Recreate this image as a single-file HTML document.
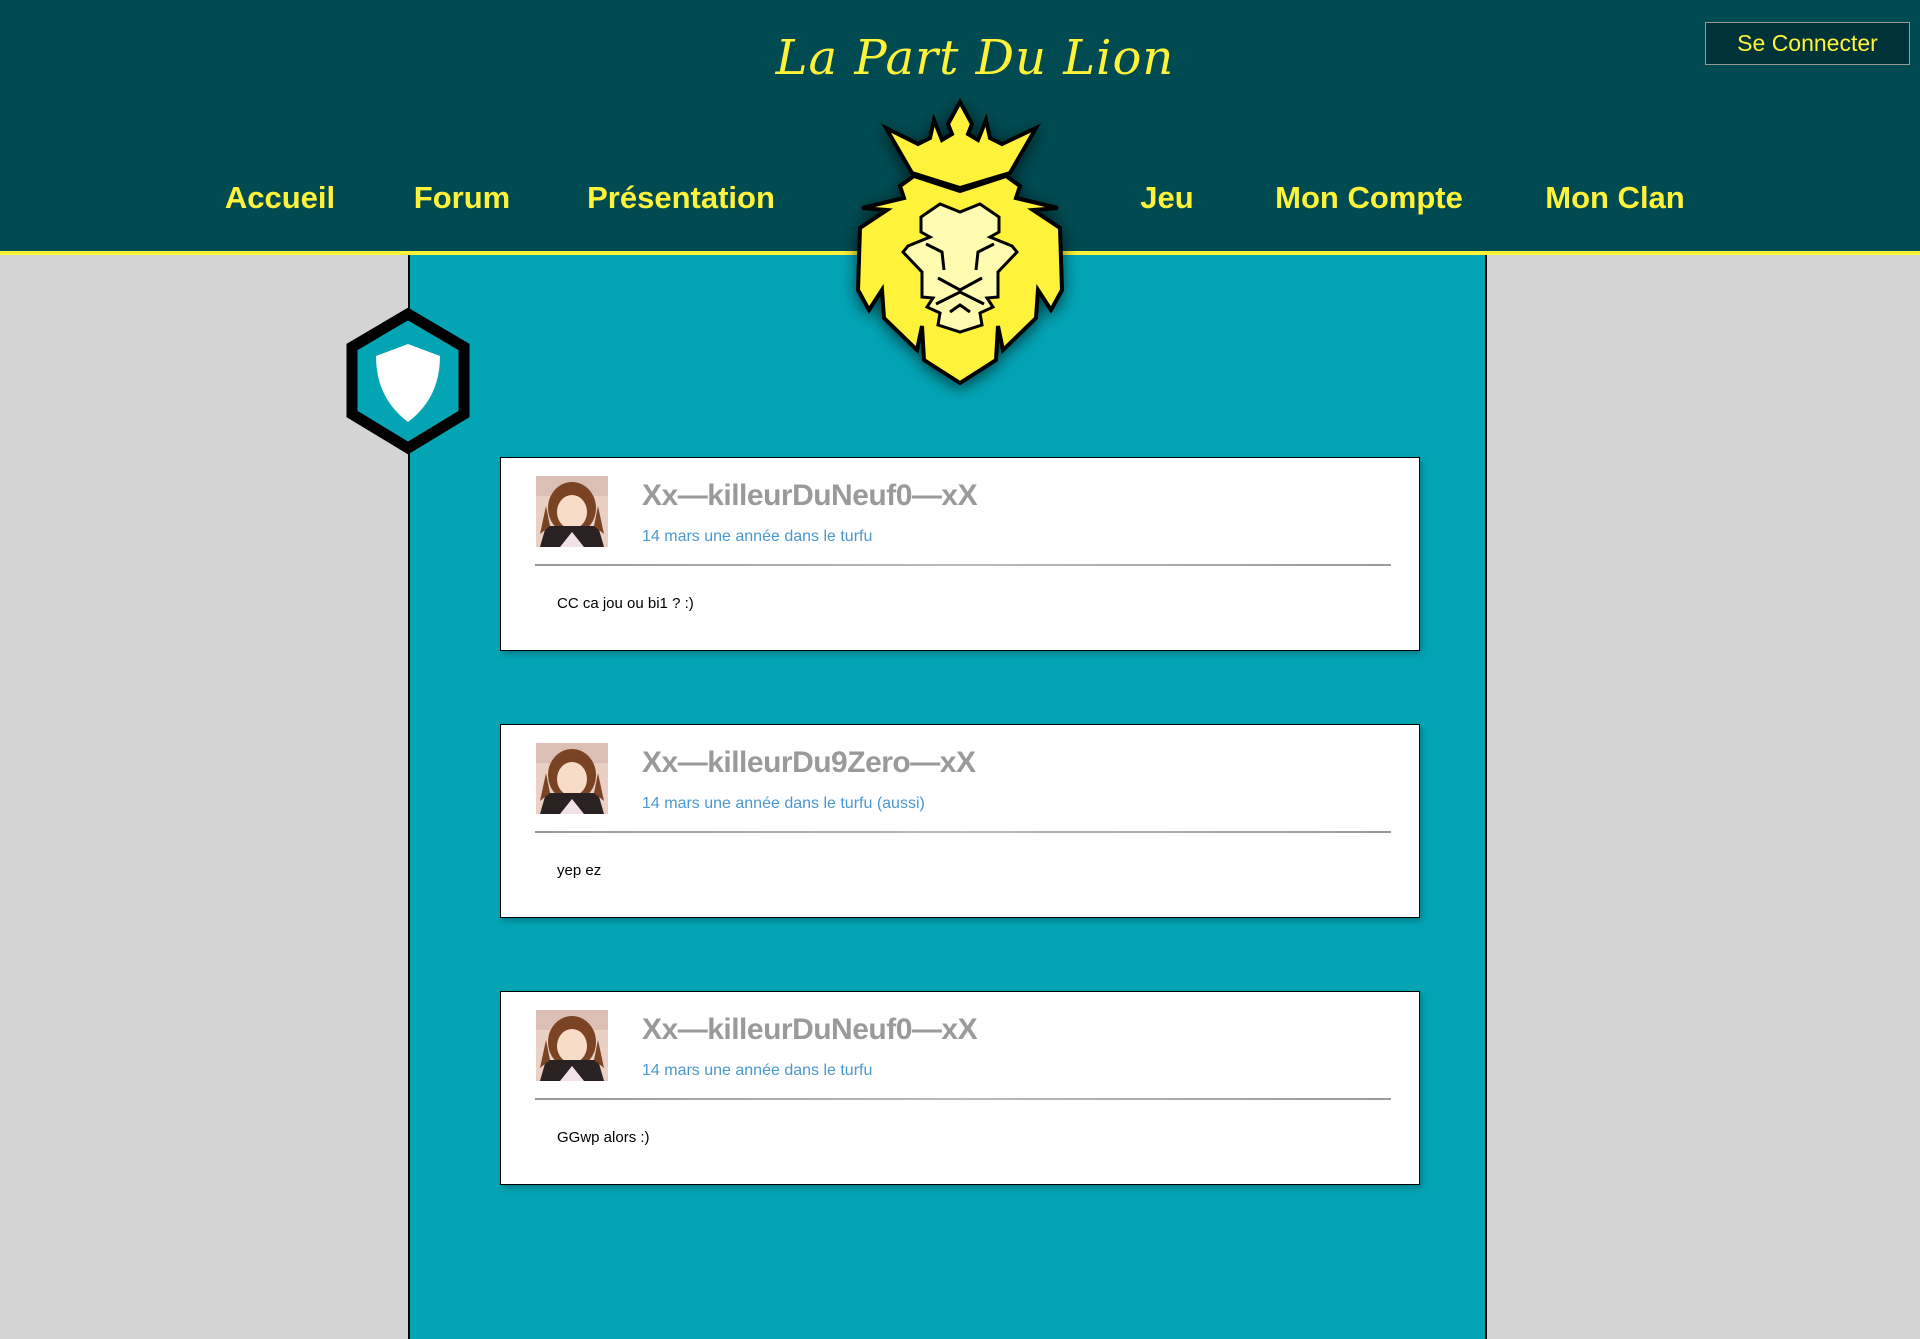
<!DOCTYPE html>
<html><head><meta charset="utf-8">
<style>
*{margin:0;padding:0;box-sizing:border-box}
html,body{width:1920px;height:1339px;overflow:hidden}
body{background:#d4d4d4;font-family:"Liberation Sans",sans-serif;position:relative}
.header{position:absolute;left:0;top:0;width:1920px;height:251px;background:#004b52}
.yl{position:absolute;left:0;top:251px;width:1920px;height:4px;background:#fff23a}
.panel{position:absolute;left:408px;top:255px;width:1079px;height:1084px;background:#03a5b5;border-left:2px solid #000;border-right:2px solid #000}
.nav{position:absolute;top:180px;color:#fff23a;font-weight:bold;font-size:31px;transform:translateX(-50%);white-space:nowrap}
.title{position:absolute;left:975px;top:30px;transform:translateX(-50%);color:#fff23a;font-family:"DejaVu Serif",serif;font-style:italic;font-size:48px;white-space:nowrap;letter-spacing:1px}
.btn{position:absolute;left:1705px;top:22px;width:205px;height:43px;background:#003338;border:1px solid #999;color:#fff23a;font-size:23px;text-align:center;line-height:41px}
.card{position:absolute;left:500px;width:920px;height:194px;background:#fff;border:1px solid #000;box-shadow:2px 3px 6px rgba(0,0,0,.25)}
.av{position:absolute;left:35px;top:18px;width:72px;height:71px}
.name{position:absolute;left:141px;top:21px;font-size:30px;font-weight:bold;color:#9a9a9a;white-space:nowrap;letter-spacing:-0.5px}
.date{position:absolute;left:141px;top:70px;font-size:16px;color:#4a98d0;white-space:nowrap}
.div{position:absolute;left:34px;top:106px;width:856px;height:2px;background:linear-gradient(90deg,#999,#bbb,#999)}
.body{position:absolute;left:56px;top:137px;font-size:15px;color:#000}
</style></head><body>
<div class="header"></div>
<div class="yl"></div>
<div class="panel"></div>
<div class="title">La Part Du Lion</div>
<div class="btn">Se Connecter</div>
<div class="nav" style="left:280px">Accueil</div>
<div class="nav" style="left:462px">Forum</div>
<div class="nav" style="left:681px">Présentation</div>
<div class="nav" style="left:1167px">Jeu</div>
<div class="nav" style="left:1369px">Mon Compte</div>
<div class="nav" style="left:1615px">Mon Clan</div>

<svg style="position:absolute;left:850px;top:95px;filter:drop-shadow(0 4px 8px rgba(0,0,0,.6))" width="220" height="295" viewBox="-8 -5 220 295">
<g stroke="#000" stroke-width="4" stroke-linejoin="miter">
<path d="M102,2 L114,24 L110,34 L120,40 L128,20 L132,38 L144,44 L178,28 L152,73 L102,88 L54,73 L28,28 L60,44 L72,38 L76,20 L84,40 L94,34 L90,24 Z" fill="#fff23a"/>
<path d="M56,76 L102,91 L148,76 L162,86 L158,98 L200,108 L175,110 L202,128 L204,190 L193,210 L180,190 L178,218 L145,250 L140,226 L138,260 L102,283 L66,260 L64,226 L59,250 L26,218 L24,190 L11,210 L0,190 L2,128 L29,110 L4,108 L46,98 L42,86 Z" fill="#fff23a"/>
<path d="M102,112 L82,104 L63,117 L63,132 L72,137 L50,146 L45,152 L64,172 L64,197 L75,198 L69,207 L82,213 L80,225 L102,232 L124,225 L122,213 L135,207 L129,198 L140,197 L140,172 L159,152 L154,146 L132,137 L141,132 L141,117 L122,104 Z" fill="#fffbb0" stroke-width="3"/>
<path d="M68,144 L84,152 L86,170 M136,144 L120,152 L118,170 M80,178 L102,190 L124,178 M78,204 L102,192 L126,204 M92,212 L102,205 L112,212" fill="none" stroke-width="3"/>
</g></svg>

<svg style="position:absolute;left:342px;top:308px" width="132" height="148" viewBox="0 0 132 148">
<polygon points="66,6 122,39 122,106 66,140 10,106 10,39" fill="#03a5b5" stroke="#000" stroke-width="11"/>
<path d="M66,36 L98,48 Q98,90 66,114 Q34,90 34,48 Z" fill="#fff"/>
</svg>

<div class="card" style="top:457px">
<svg class="av" viewBox="0 0 72 71"><rect width="72" height="71" fill="#e9cfc4"/><path d="M0,0 L72,0 L72,20 L0,20Z" fill="#dcbfb4"/><ellipse cx="36" cy="32" rx="24" ry="26" fill="#7a4323"/><ellipse cx="36" cy="36" rx="15" ry="17" fill="#f7dcc8"/><path d="M4,71 L10,50 L62,50 L68,71Z" fill="#2a2222"/><path d="M24,71 L36,56 L48,71Z" fill="#f2e2e8"/><path d="M10,30 L4,58 L14,50Z M62,30 L68,58 L58,50Z" fill="#7a4323"/></svg>
<div class="name">Xx—killeurDuNeuf0—xX</div>
<div class="date">14 mars une année dans le turfu</div>
<div class="div"></div>
<div class="body">CC ca jou ou bi1 ? :)</div>
</div>

<div class="card" style="top:724px">
<svg class="av" viewBox="0 0 72 71"><rect width="72" height="71" fill="#e9cfc4"/><path d="M0,0 L72,0 L72,20 L0,20Z" fill="#dcbfb4"/><ellipse cx="36" cy="32" rx="24" ry="26" fill="#7a4323"/><ellipse cx="36" cy="36" rx="15" ry="17" fill="#f7dcc8"/><path d="M4,71 L10,50 L62,50 L68,71Z" fill="#2a2222"/><path d="M24,71 L36,56 L48,71Z" fill="#f2e2e8"/><path d="M10,30 L4,58 L14,50Z M62,30 L68,58 L58,50Z" fill="#7a4323"/></svg>
<div class="name">Xx—killeurDu9Zero—xX</div>
<div class="date">14 mars une année dans le turfu (aussi)</div>
<div class="div"></div>
<div class="body">yep ez</div>
</div>

<div class="card" style="top:991px">
<svg class="av" viewBox="0 0 72 71"><rect width="72" height="71" fill="#e9cfc4"/><path d="M0,0 L72,0 L72,20 L0,20Z" fill="#dcbfb4"/><ellipse cx="36" cy="32" rx="24" ry="26" fill="#7a4323"/><ellipse cx="36" cy="36" rx="15" ry="17" fill="#f7dcc8"/><path d="M4,71 L10,50 L62,50 L68,71Z" fill="#2a2222"/><path d="M24,71 L36,56 L48,71Z" fill="#f2e2e8"/><path d="M10,30 L4,58 L14,50Z M62,30 L68,58 L58,50Z" fill="#7a4323"/></svg>
<div class="name">Xx—killeurDuNeuf0—xX</div>
<div class="date">14 mars une année dans le turfu</div>
<div class="div"></div>
<div class="body">GGwp alors :)</div>
</div>
</body></html>
